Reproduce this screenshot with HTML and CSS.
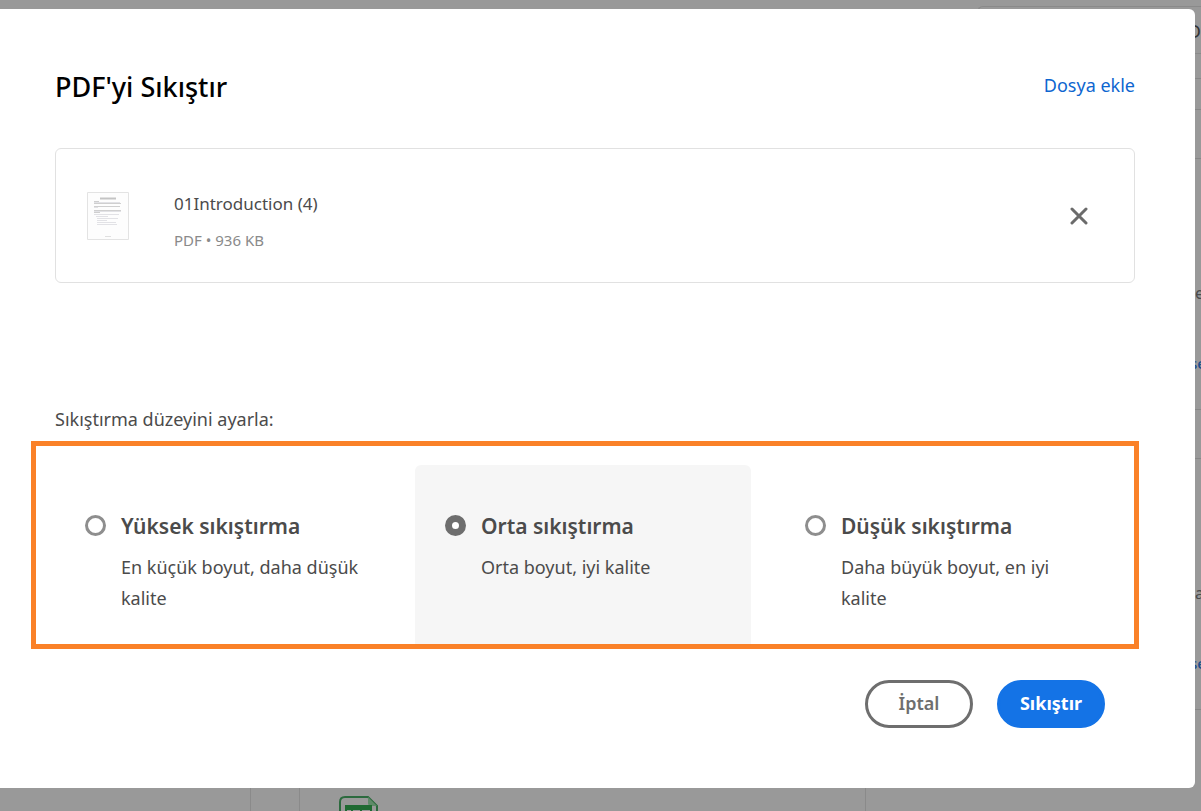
FILE: index.html
```html
<!DOCTYPE html>
<html lang="tr">
<head>
<meta charset="utf-8">
<meta name="viewport" content="width=device-width, initial-scale=1">
<title>PDF'yi Sıkıştır</title>
<link rel="stylesheet" href="styles.css">
</head>
<body>
<div class="backdrop" aria-hidden="true">
  <div class="topbar"></div>
  <div class="rail">
    <div class="rail-row row-title">D</div>
    <div class="rail-row row-gap"></div>
    <div class="rail-row row-small"></div>
    <div class="rail-row row-head"></div>
    <div class="rail-row row-card"><span>e</span><span class="blue">se</span></div>
    <div class="rail-row row-head"></div>
    <div class="rail-row row-card"><span>a</span><span class="blue">se</span></div>
  </div>
  <div class="sheet-row">
    <div class="cell cell-a"></div>
    <div class="cell cell-b"></div>
    <div class="cell cell-c">
      <svg width="40" height="46" viewBox="0 0 40 46" fill="none">
        <path d="M1 46V6q0-5 5-5h23l9 9v36" stroke="#2c6a3e" stroke-width="2"/>
        <path d="M29 1v6q0 3 3 3h6z" fill="#5f8a69"/>
        <path d="M6 9h27v30H6z" fill="#1f6a32"/>
        <path d="M8 14h4v4H8zM14 14h7v4h-7zM23 14h8v4h-8z" fill="#999"/>
      </svg>
    </div>
  </div>
</div>
<main class="dialog" role="dialog" aria-labelledby="title">
  <header class="head">
    <h1 id="title">PDF'yi Sıkıştır</h1>
    <a href="#">Dosya ekle</a>
  </header>
  <section class="file">
    <svg class="thumb" width="42" height="48" viewBox="0 0 42 48" fill="none">
      <path d="M.5.5h41v47H.5z" fill="#fdfdfd" stroke="#e3e3e3"/>
      <path d="M13 6.500h16" stroke="#c4c4c4" stroke-width="2"/>
      <path d="M7 9.500h5M7 11.500h27M7 14.500h26M7 18.500h27M7 20.500h6" stroke="#cfcfcf"/>
      <path d="M7 10.500h26M7 15.500h4M7 19.500h27M7 22.500h25M9 24.500h12M10 26.500h21M10 28.500h10M10 30.500h19M10 32.500h20" stroke="#e2e2e6"/>
      <path d="M18 44.500h6" stroke="#e0e0e0"/>
    </svg>
    <div class="file-text">
      <div class="file-name">01Introduction (4)</div>
      <div class="file-meta">PDF • 936 KB</div>
    </div>
    <button class="remove" type="button" aria-label="Kaldır">
      <svg width="18" height="18" viewBox="0 0 18 18" fill="none" stroke="#6b6b6b" stroke-width="3" stroke-linecap="round"><path d="M2 2l14 14M16 2L2 16"/></svg>
    </button>
  </section>
  <form class="form">
    <p class="legend" id="legend">Sıkıştırma düzeyini ayarla:</p>
    <div class="levels" role="radiogroup" aria-labelledby="legend">
      <label class="level" for="high">
        <input type="radio" name="level" id="high">
        <span class="level-text"><span class="level-name">Yüksek sıkıştırma</span><span class="level-info">En küçük boyut, daha düşük kalite</span></span>
      </label>
      <label class="level" for="mid">
        <input type="radio" name="level" id="mid" checked>
        <span class="level-text"><span class="level-name">Orta sıkıştırma</span><span class="level-info">Orta boyut, iyi kalite</span></span>
      </label>
      <label class="level" for="low">
        <input type="radio" name="level" id="low">
        <span class="level-text"><span class="level-name">Düşük sıkıştırma</span><span class="level-info">Daha büyük boyut, en iyi kalite</span></span>
      </label>
    </div>
    <footer class="actions">
      <button class="btn cancel" type="button">İptal</button>
      <button class="btn submit" type="button">Sıkıştır</button>
    </footer>
  </form>
</main>
</body>
</html>
```
FILE: styles.css
```css
* { box-sizing: border-box; }
body {
  margin: 0;
  min-height: 100vh;
  display: flex;
  padding: 9px 6px 23px 0;
  background: #999;
  color: #4b4b4b;
  font-family: "Noto Sans", "Open Sans", sans-serif;
  font-size: 18px;
  line-height: 31px;
  position: relative;
  overflow: hidden;
}
.backdrop { position: absolute; inset: 0; overflow: hidden; display: flex; flex-direction: column; justify-content: space-between; }
.topbar { position: absolute; top: 6px; right: 0; width: 224px; height: 48px; border: 1px solid #8a8a8a; border-right: 0; border-radius: 6px 0 0 0; }
.rail { align-self: flex-end; width: 6px; }
.rail-row { border-bottom: 1px solid #878787; display: flex; flex-direction: column; align-items: flex-start; white-space: nowrap; }
.row-title { height: 54px; padding-top: 16px; align-items: flex-end; color: #333; }
.row-gap { height: 25px; }
.row-small { height: 31px; }
.row-head { height: 49px; }
.row-card { height: 251px; padding-top: 119px; gap: 39px; font-size: 16px; }
.blue { color: #1c4c8c; font-size: 15px; font-weight: 500; align-self: center; }
.sheet-row { position: absolute; left: 0; right: 0; bottom: 0; height: 23px; display: flex; }
.cell { border-right: 1px solid #8a8a8a; }
.cell-a { width: 251px; }
.cell-b { width: 49px; }
.cell-c { width: 566px; padding: 8px 0 0 39px; overflow: hidden; }

.dialog {
  position: relative;
  flex: 1;
  min-width: 0;
  background: #fff;
  border-radius: 0 6px 6px 0;
  padding: 56px 60px 60px 55px;
}
.head { display: flex; justify-content: space-between; align-items: flex-start; height: 83px; }
h1 { margin: 0; font-size: 27px; line-height: 44px; font-weight: 500; color: #000; }
.head a { color: #0d66d0; text-decoration: none; line-height: 40px; }
.file { display: flex; align-items: center; border: 1px solid #e1e1e1; border-radius: 6px; padding: 31px 44px 30px 31px; }
.file-text { flex: 1; margin-left: 45px; }
.file-name { font-size: 17px; line-height: 48px; color: #4b4b4b; }
.file-meta { font-size: 15px; line-height: 24px; color: #8a8a8a; }
.remove { border: 0; padding: 0; background: none; width: 22px; height: 22px; display: grid; place-items: center; }
.legend { margin: 121px 0 6px; }
.levels {
  display: grid;
  grid-template-columns: repeat(3, 1fr);
  gap: 24px;
  margin: 0 -4px 0 -24px;
  border: 5px solid #fa8128;
  padding: 19px 23px 0 19px;
}
.level { display: flex; align-items: flex-start; padding: 46px 20px 30px 30px; border-radius: 6px 6px 0 0; }
.level:has(input:checked) { background: #f6f6f6; }
.level input { appearance: none; flex: none; width: 21px; height: 21px; margin: 4px 15px 0 0; border: 3px solid #8e8e8e; border-radius: 50%; background: #fff; }
.level input:checked { border: 7px solid #6e6e6e; }
.level-text { display: flex; flex-direction: column; gap: 10px; }
.level-name { font-size: 21px; font-weight: 600; }
.actions { display: flex; justify-content: flex-end; gap: 24px; padding: 31px 30px 0 0; }
.btn { width: 108px; height: 48px; border-radius: 24px; border: 3px solid #6e6e6e; background: #fff; color: #6e6e6e; font: 600 18px/40px "Noto Sans", "Open Sans", sans-serif; padding: 0 0 2px; }
.submit { background: #1473e6; border-color: #1473e6; color: #fff; font-weight: 700; }
```
